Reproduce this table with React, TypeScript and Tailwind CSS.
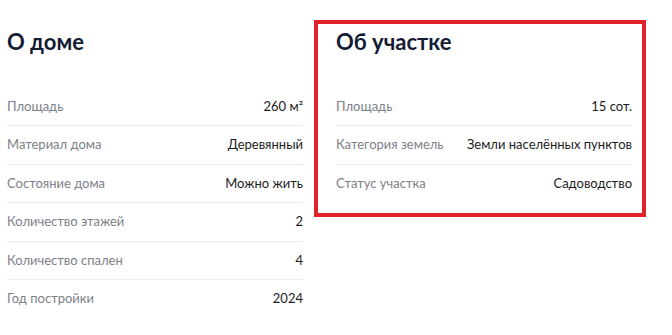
import React from "react";

type Row = { label: string; value: string };

const house: Row[] = [
  { label: "Площадь", value: "260 м²" },
  { label: "Материал дома", value: "Деревянный" },
  { label: "Состояние дома", value: "Можно жить" },
  { label: "Количество этажей", value: "2" },
  { label: "Количество спален", value: "4" },
  { label: "Год постройки", value: "2024" },
];

const plot: Row[] = [
  { label: "Площадь", value: "15 сот." },
  { label: "Категория земель", value: "Земли населённых пунктов" },
  { label: "Статус участка", value: "Садоводство" },
];

const InfoBlock = ({ title, rows }: { title: string; rows: Row[] }) => {
  return (
    <div className="w-[296px]">
      <h2 className="text-[22px] leading-[28px] font-bold text-[#141c33] mt-[28px] mb-[32px]">
        {title}
      </h2>
      <div className="flex flex-col">
        {rows.map((row, i) => (
          <div
            key={row.label}
            className={`flex items-center justify-between h-[38.4px] text-[13px] ${
              i < rows.length - 1 ? "border-b border-[#ebebeb]" : ""
            }`}
          >
            <span className="text-[#7d8088]">{row.label}</span>
            <span className="text-[#1c1c1c]">{row.value}</span>
          </div>
        ))}
      </div>
    </div>
  );
};

const App = () => {
  return (
    <div
      className="w-[672px] h-[335px] bg-white pl-[7px] flex gap-[33px] overflow-hidden"
      style={{ fontFamily: "Lato, 'Liberation Sans', sans-serif" }}
    >
      <InfoBlock title="О доме" rows={house} />
      <div className="relative self-start">
        <InfoBlock title="Об участке" rows={plot} />
        <div className="absolute top-[20px] -left-[22px] -right-[14px] -bottom-[14px] border-[4px] border-[#e0222b] pointer-events-none"></div>
      </div>
    </div>
  );
};

export default App;
